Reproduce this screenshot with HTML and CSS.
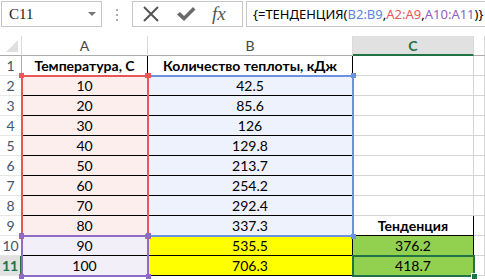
FILE: index.html
```html
<!DOCTYPE html>
<html lang="ru">
<head>
    <meta charset="UTF-8">
    <title>ТЕНДЕНЦИЯ</title>
    <link rel="stylesheet" href="styles.css">
</head>
<body>
    <div class="toolbar">
        <div class="namebox">
            <span class="name">C11</span>
            <span class="caret"></span>
        </div>
        <div class="grip"><i></i><i></i><i></i></div>
        <div class="fxbox">
            <svg class="icon" width="18" height="18" viewBox="0 0 18 18">
                <path d="M2 2 L16 16 M16 2 L2 16" stroke="#555" stroke-width="2" fill="none"/>
            </svg>
            <svg class="icon" width="20" height="18" viewBox="0 0 20 18">
                <path d="M1 9.5 L4 7 L8 11 L17 2 L19.5 4.5 L8 16 Z" fill="#6a6a6a"/>
            </svg>
            <span class="fx">fx</span>
        </div>
        <div class="formula">{=ТЕНДЕНЦИЯ(<span class="ref-blue">B2:B9</span>,<span class="ref-red">A2:A9</span>,<span class="ref-purple">A10:A11</span>)}</div>
    </div>

    <div class="sheet">
        <div class="grid">
            <div class="hd corner"><span class="tri"></span></div>
            <div class="hd">A</div>
            <div class="hd">B</div>
            <div class="hd active">C</div>
            <div class="hd"></div>

            <div class="rh">1</div>
            <div class="c b bold">Температура, C</div>
            <div class="c b bold">Количество теплоты, кДж</div>
            <div class="c"></div>
            <div class="c"></div>

            <div class="rh">2</div>
            <div class="c b pink">10</div>
            <div class="c b blue">42.5</div>
            <div class="c"></div>
            <div class="c"></div>

            <div class="rh">3</div>
            <div class="c b pink">20</div>
            <div class="c b blue">85.6</div>
            <div class="c"></div>
            <div class="c"></div>

            <div class="rh">4</div>
            <div class="c b pink">30</div>
            <div class="c b blue">126</div>
            <div class="c"></div>
            <div class="c"></div>

            <div class="rh">5</div>
            <div class="c b pink">40</div>
            <div class="c b blue">129.8</div>
            <div class="c"></div>
            <div class="c"></div>

            <div class="rh">6</div>
            <div class="c b pink">50</div>
            <div class="c b blue">213.7</div>
            <div class="c"></div>
            <div class="c"></div>

            <div class="rh">7</div>
            <div class="c b pink">60</div>
            <div class="c b blue">254.2</div>
            <div class="c"></div>
            <div class="c"></div>

            <div class="rh">8</div>
            <div class="c b pink">70</div>
            <div class="c b blue">292.4</div>
            <div class="c"></div>
            <div class="c"></div>

            <div class="rh">9</div>
            <div class="c b pink">80</div>
            <div class="c b blue">337.3</div>
            <div class="c b bold">Тенденция</div>
            <div class="c"></div>

            <div class="rh">10</div>
            <div class="c b lilac">90</div>
            <div class="c b yellow">535.5</div>
            <div class="c b green">376.2</div>
            <div class="c"></div>

            <div class="rh active">11</div>
            <div class="c b lilac">100</div>
            <div class="c b yellow">706.3</div>
            <div class="c b green">418.7</div>
            <div class="c"></div>
        </div>

        <!-- range highlights from the formula -->
        <div class="range range-blue"><i class="tl"></i><i class="tr"></i><i class="bl"></i><i class="br"></i></div>
        <div class="range range-red"><i class="tl"></i><i class="tr"></i><i class="bl"></i><i class="br"></i></div>
        <div class="range range-purple"><i class="tl"></i><i class="tr"></i><i class="bl"></i><i class="br"></i></div>
        <div class="selection"><i class="handle"></i></div>
    </div>
</body>
</html>
```

FILE: styles.css
```css
body {
    margin: 0;
    width: 485px;
    height: 279px;
    overflow: hidden;
    background: #fff;
    font-family: 'Lato', 'Liberation Sans', sans-serif;
}

/* formula bar */

.toolbar {
    display: flex;
    align-items: flex-start;
    height: 36px;
    padding: 1px 0 0 1px;
    box-sizing: border-box;
}

.namebox {
    display: flex;
    align-items: center;
    justify-content: space-between;
    width: 101px;
    height: 26px;
    box-sizing: border-box;
    border: 1px solid #c6c6c6;
    padding: 0 5px 0 7px;
}

.name {
    font-family: 'Liberation Serif', serif;
    font-size: 15px;
    color: #222;
}

.caret {
    width: 0;
    height: 0;
    border-left: 4px solid transparent;
    border-right: 4px solid transparent;
    border-top: 4px solid #777;
}

.grip {
    display: flex;
    flex-direction: column;
    gap: 3px;
    margin: 8px 14px 0 14px;
}

.grip i {
    width: 2px;
    height: 2px;
    background: #aaa;
}

.fxbox {
    display: flex;
    align-items: center;
    gap: 16px;
    width: 111px;
    height: 26px;
    box-sizing: border-box;
    border: 1px solid #c6c6c6;
    padding-left: 9px;
}

.fx {
    font-family: 'Liberation Serif', serif;
    font-style: italic;
    font-size: 19px;
    color: #555;
}

.formula {
    flex: 1;
    height: 26px;
    margin-left: 3px;
    box-sizing: border-box;
    border: 1px solid #c6c6c6;
    border-right: none;
    padding: 3px 0 0 6px;
    font-family: 'Noto Sans', sans-serif;
    font-size: 13px;
    color: #000;
    white-space: nowrap;
}

.ref-blue { color: #5b86d8; }
.ref-red { color: #e8585a; }
.ref-purple { color: #8b62c7; }

/* sheet */

.sheet {
    position: relative;
}

.grid {
    display: grid;
    grid-template-columns: 22px 126px 205px 121px 11px;
    grid-auto-rows: 20px;
    font-size: 14px;
}

.hd {
    display: flex;
    align-items: center;
    justify-content: center;
    box-sizing: border-box;
    border-right: 1px solid #dadada;
    border-bottom: 1px solid #ababab;
    color: #444;
}

.hd.active {
    background: #e1e1e1;
    color: #217346;
    font-weight: bold;
    border-bottom: 2px solid #217346;
}

.corner {
    position: relative;
}

.tri {
    position: absolute;
    right: 3px;
    bottom: 3px;
    width: 0;
    height: 0;
    border-left: 12px solid transparent;
    border-bottom: 12px solid #dfdfdf;
}

.rh {
    display: flex;
    align-items: center;
    justify-content: center;
    box-sizing: border-box;
    border-right: 1px solid #ababab;
    border-bottom: 1px solid #e6e6e6;
    color: #44546a;
}

.rh.active {
    background: #e1e1e1;
    color: #217346;
    font-weight: bold;
    border-right: 2px solid #217346;
}

.c {
    display: flex;
    align-items: center;
    justify-content: center;
    box-sizing: border-box;
    border-right: 1px solid #d4d4d4;
    border-bottom: 1px solid #d4d4d4;
    color: #000;
    white-space: nowrap;
}

.c.b {
    border-right-color: #000;
    border-bottom-color: #000;
}

.bold { font-weight: bold; }
.pink { background: #fdeeee; }
.blue { background: #eef2fc; }
.lilac { background: #f2eff9; }
.yellow { background: #ffff00; }
.green { background: #92d050; }

/* highlighted ranges lie over the cells */

.range {
    position: absolute;
    box-sizing: border-box;
    border: 2px solid;
}

.range i {
    position: absolute;
    width: 5px;
    height: 5px;
}

.range .tl { left: -4px; top: -4px; }
.range .tr { right: -4px; top: -4px; }
.range .bl { left: -4px; bottom: -4px; }
.range .br { right: -4px; bottom: -4px; }

.range-red {
    left: 21px;
    top: 39px;
    width: 128px;
    height: 162px;
    border-color: #e8585a;
}

.range-red i { background: #e8585a; }

.range-blue {
    left: 147px;
    top: 39px;
    width: 207px;
    height: 162px;
    border-color: #6b93e0;
}

.range-blue i { background: #6b93e0; }

.range-purple {
    left: 21px;
    top: 199px;
    width: 128px;
    height: 42px;
    border-color: #8e6cc6;
}

.range-purple i { background: #8e6cc6; }

.selection {
    position: absolute;
    left: 352px;
    top: 219px;
    width: 123px;
    height: 22px;
    box-sizing: border-box;
    border: 2px solid #217346;
}

.handle {
    position: absolute;
    right: -5px;
    bottom: -5px;
    width: 5px;
    height: 5px;
    background: #217346;
    border: 1px solid #fff;
}
```
